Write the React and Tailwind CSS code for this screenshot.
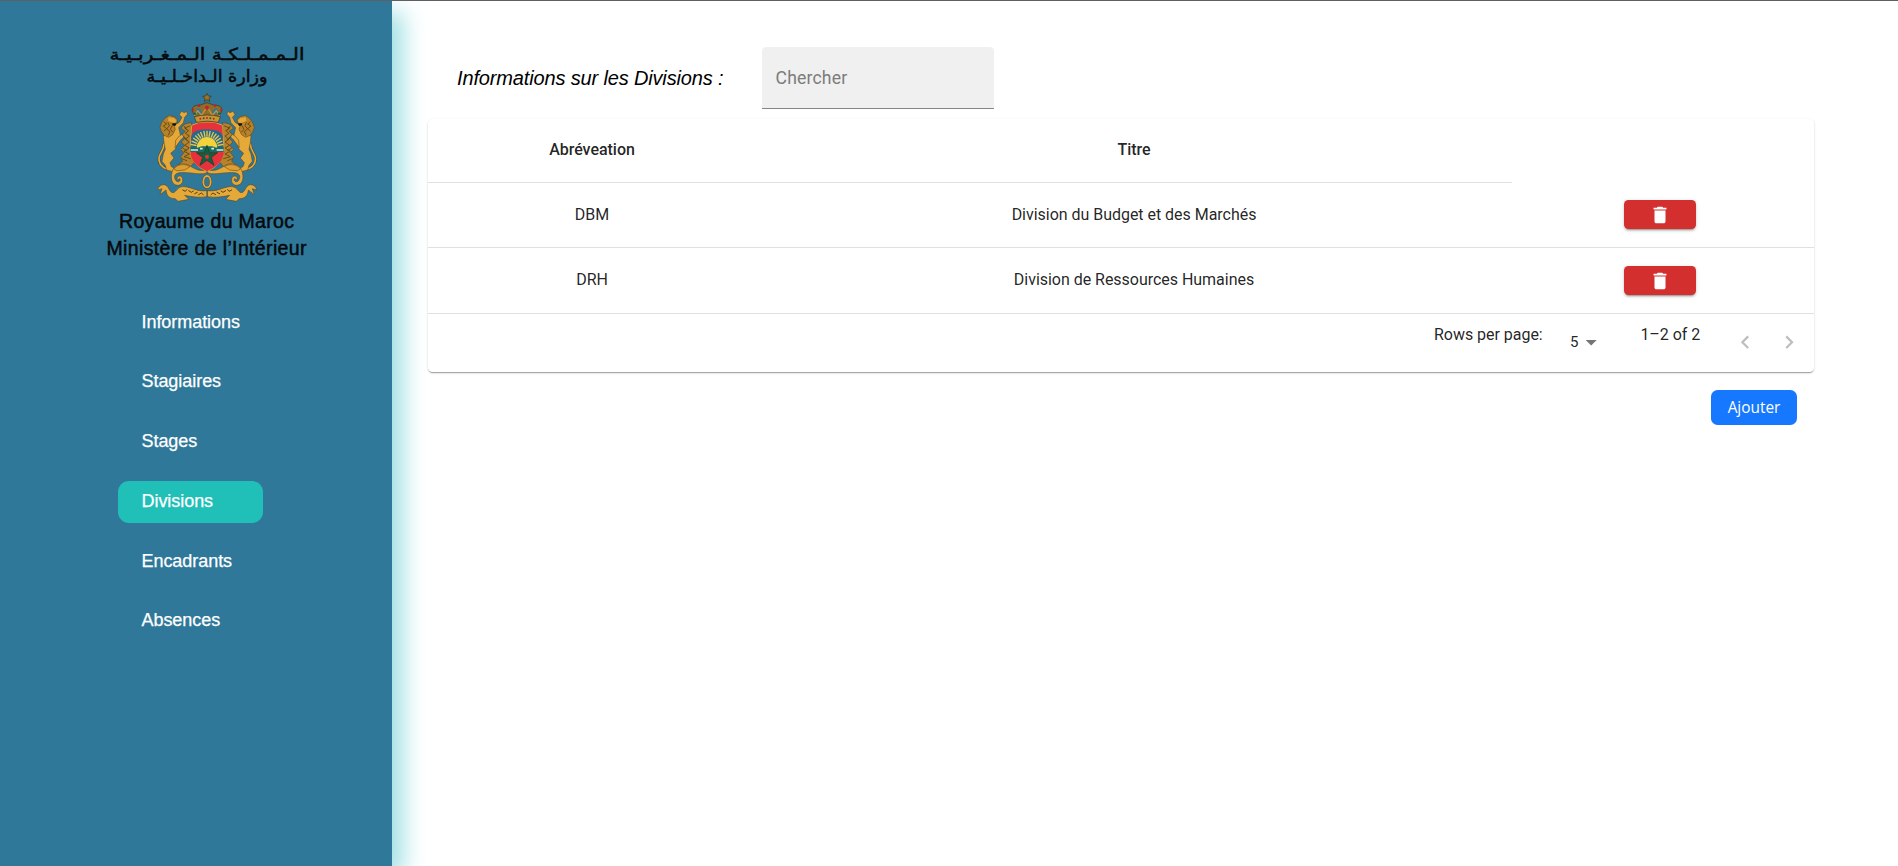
import React from "react";

const nav = ["Informations", "Stagiaires", "Stages", "Divisions", "Encadrants", "Absences"];
const rows = [
  { abbr: "DBM", title: "Division du Budget et des Marchés", height: "h-[65px] pb-px" },
  { abbr: "DRH", title: "Division de Ressources Humaines", height: "h-[66px]" },
];
const rays = [-80, -68, -56, -45, -34, -23, -11, 0, 11, 23, 34, 45, 56, 68, 80];

/* One side of the coat of arms: supporter, mantle and scroll. */
function Side() {
  return (
    <g stroke="#5b4317" strokeWidth="1.6" strokeLinejoin="round" strokeLinecap="round">
      <path fill="none" strokeWidth="8" d="M232 238C212 230 205 218 207 203C209 190 222 180 222 162" />
      <path fill="none" stroke="#e5a93a" strokeWidth="5" d="M232 238C212 230 205 218 207 203C209 190 222 180 222 162" />
      <path fill="#e5a93a" d="M256 104L268 97L276 82L268 74L274 64L283 68L290 64L292 73L284 82L280 98L266 113L272 138L262 160L256 178L242 190L252 204L240 218L244 230L258 236L252 246L230 240L226 226L216 214L220 192L226 178L222 158L220 138Z" />
      <path fill="#e5a93a" d="M258 150L268 138L278 132L282 140L272 150L256 172Z" />
      <path fill="#b98128" d="M226 84L238 76L252 80L262 88L260 100L252 106L256 118L248 134L236 142L222 136L214 124L210 112L216 96Z" />
      <path fill="#e5a93a" stroke="none" d="M236 82L252 84L260 92L254 100L242 96L234 92Z" />
      <path fill="none" strokeWidth="2.5" d="M222 96l8 6-10 6 10 8-8 7M234 98l4 9-8 10 10 8-5 10M246 108l-5 10 7 8" />
      <path fill="#141414" stroke="none" d="M247 100l12 0-3 8-9-2z" />
      <path fill="#b5822d" d="M304 98C286 100 276 104 274 116L286 124L276 134L286 144L274 156L284 166L272 178L282 188L272 200L278 214L264 226L300 232L316 214L302 190Z" />
      <path fill="none" stroke="#4f3c14" strokeWidth="2.2" d="M300 108l-16 6 12 8-10 8 12 8-12 10 12 8-14 10 14 8-16 10 16 8-16 8 20 6M282 108l8 12M280 140l12 10M278 174l12 8M276 206l14 6" />
      <path fill="#e5a93a" d="M350 238C336 246 318 240 300 228C282 216 256 222 248 240C240 262 244 284 262 286C276 287 282 272 276 262C270 254 258 260 262 270L268 268C266 264 272 264 270 272C262 282 252 268 254 258C258 246 276 248 290 248C310 248 334 256 350 248Z" />
      <path fill="#dba035" d="M252 236C262 222 286 220 300 230L284 240L262 242Z" />
      <path fill="#e5a93a" d="M350 302C322 306 306 292 284 290C262 288 262 304 250 308C236 308 238 286 222 284C210 284 204 292 203 300L216 296L210 314L228 300C230 318 238 326 256 326L264 334L296 328L284 316C306 320 326 324 350 320Z" />
      <path fill="none" stroke="#3a2b0d" strokeWidth="2.5" d="M278 300l8 4 4-5M296 302l8 5 6-4M314 311l8-4M326 314l8-5 6 5" />
    </g>
  );
}

function Crown() {
  return (
    <g stroke="#3f3012" strokeWidth="2" strokeLinejoin="round">
      <path fill="#8e6c2a" d="M316 80C300 62 304 46 322 46C334 46 340 40 350 38C360 40 366 46 378 46C396 46 400 62 384 80Z" />
      <path fill="#2f7899" stroke="none" d="M320 56c8-2 14 4 16 14l-14 4c-6-6-8-14-2-18zM380 56c-8-2-14 4-16 14l14 4c6-6 8-14 2-18z" />
      <path fill="none" stroke="#c99435" strokeWidth="4" d="M312 78l10-16 12 14 16-26 16 26 12-14 10 16" />
      <path fill="#c99435" d="M312 80Q350 70 390 80L384 97Q350 90 318 97Z" />
      <path fill="#9a742d" d="M350 10l4 8 9 1-7 6 2 9-8-5-8 5 2-9-7-6 9-1z" />
      <g stroke="none" fill="#c4202b">
        <circle cx="350" cy="53" r="6" /><circle cx="307" cy="60" r="4" /><circle cx="393" cy="60" r="4" />
        <circle cx="326" cy="47" r="4" /><circle cx="374" cy="47" r="4" /><circle cx="330" cy="86" r="3" />
        <circle cx="370" cy="86" r="3" /><circle cx="350" cy="84" r="3" />
      </g>
      <g stroke="none" fill="#17663f">
        <circle cx="314" cy="71" r="3.5" /><circle cx="386" cy="71" r="3.5" /><circle cx="340" cy="85" r="3" /><circle cx="360" cy="85" r="3" />
      </g>
    </g>
  );
}

function Logo() {
  return (
    <svg className="block h-[220px] w-[210px]" viewBox="102 42 210 220">
      <g fontFamily="DejaVu Sans, sans-serif" fontSize="16.5" fill="#05090b" stroke="#05090b" strokeWidth="0.5" direction="rtl" textAnchor="middle">
        <text x="207" y="60" textLength="195" lengthAdjust="spacingAndGlyphs">الـمـمـلـكـة الـمـغـربـيـة</text>
        <text x="207" y="82" textLength="121" lengthAdjust="spacingAndGlyphs">وزارة الـداخـلـيـة</text>
      </g>
      <g transform="translate(90 90) scale(0.33333)">
        <Side />
        <g transform="translate(703 0) scale(-1 1)"><Side /></g>
        <path d="M305 106Q326 94 351 96Q376 94 398 106L402 180Q400 224 351 244Q302 224 300 180Z" fill="#e5323b" stroke="#d8a23a" strokeWidth="3" />
        <path d="M304 138Q310 118 351 118Q392 118 398 138L400 174H302Z" fill="#23698f" />
        <g stroke="#e9c64a" strokeWidth="4">
          {rays.map((a) => (
            <path key={a} d="M351 140V122" transform={`rotate(${a} 351 172)`} />
          ))}
        </g>
        <path d="M320 174a31 33 0 0 1 62 0z" fill="#f3d23c" />
        <path d="M301 172l12-3 10 4 12-4h32l12 4 10-4 12 3v14H301z" fill="#1b6b62" />
        <path d="M302 180h22M380 180h20M330 176h8M364 176h8" stroke="#dce9e4" strokeWidth="5" />
        <path d="M301 187h101q-4 38-51 56q-47-18-50-56z" fill="#e5323b" />
        <path d="M351 166l8 22h24l-19 14 8 24-21-15-21 15 8-24-19-14h24z" fill="#12603f" stroke="#0b3f2b" strokeWidth="2" />
        <circle cx="351" cy="200" r="6" fill="#e5323b" />
        <ellipse cx="351" cy="275" rx="11" ry="17" fill="none" stroke="#5b4317" strokeWidth="8" />
        <ellipse cx="351" cy="275" rx="11" ry="17" fill="none" stroke="#e5a93a" strokeWidth="5.500" />
        <g transform="translate(1 0)"><Crown /></g>
      </g>
      <g fontFamily="Liberation Sans, Arial, sans-serif" fontSize="19.5" fill="#05090b" stroke="#05090b" strokeWidth="0.5" textAnchor="middle">
        <text x="206.500" y="228" textLength="175">Royaume du Maroc</text>
        <text x="206.500" y="255" textLength="200">Ministère de l’Intérieur</text>
      </g>
    </svg>
  );
}

function Chevron({ d }) {
  return (
    <svg className="size-[26.4px]" viewBox="0 0 24 24" fill="#bdbdbd"><path d={d} /></svg>
  );
}

function DeleteButton() {
  return (
    <button className="flex h-[29px] w-[72px] items-center justify-center rounded-[4.4px] bg-[#d32f2f] shadow-[0_3px_1px_-2px_rgba(0,0,0,0.2),0_2px_2px_0_rgba(0,0,0,0.14),0_1px_5px_0_rgba(0,0,0,0.12)]">
      <svg className="size-[22px]" viewBox="0 0 24 24" fill="#fff">
        <path d="M6 19c0 1.100.9 2 2 2h8c1.100 0 2-.9 2-2V7H6v12zM19 4h-3.500l-1-1h-5l-1 1H5v2h14V4z" />
      </svg>
    </button>
  );
}

export default function App() {
  return (
    <div className="flex h-[866px] w-full overflow-hidden border-t border-[#5f5f66] bg-white font-['Roboto',sans-serif]">
      <aside className="flex w-[392px] shrink-0 flex-col bg-[#2f7899] pt-[41px] shadow-[11px_11px_22px_#a0e0e4]">
        <div className="ml-[102px]"><Logo /></div>
        <nav className="mt-[40px] ml-[118px] flex w-[145px] flex-col gap-[17.8px] font-['Liberation_Sans',sans-serif] text-[18px] tracking-[-0.05px] text-white">
          {nav.map((n) => (
            <a
              key={n}
              className={
                n === "Divisions"
                  ? "flex h-[42px] items-center rounded-[11px] bg-[#20c0b8] pb-[2px] pl-[23.5px] [-webkit-text-stroke:0.25px_white]"
                  : "flex h-[42px] items-center pb-[2px] pl-[23.5px] [-webkit-text-stroke:0.25px_white]"
              }
            >
              {n}
            </a>
          ))}
        </nav>
      </aside>

      <main className="flex w-[1422px] flex-col pt-[46px] pl-9">
        <div className="flex h-[62px] items-center">
          <h1 className="w-[334px] pl-[29px] font-['Liberation_Sans',sans-serif] text-[20px] tracking-[-0.15px] whitespace-nowrap text-black italic">
            Informations sur les Divisions :
          </h1>
          <div className="flex h-[62px] w-[232px] items-center rounded-t-[4.4px] border-b border-[#858585] bg-[#f0f0f0] pt-0.5 pl-[13.5px] text-[17.6px] tracking-[0.01em] text-[#7c7c7c]">
            Chercher
          </div>
        </div>

        <section className="mt-[10px] rounded-[4.4px] bg-white text-[16px] leading-6 tracking-[-0.03px] text-black/87 shadow-[0_2px_1px_-1px_rgba(0,0,0,0.2),0_1px_1px_0_rgba(0,0,0,0.14),0_1px_3px_0_rgba(0,0,0,0.12)]">
          <div className="grid h-16 grid-cols-[328px_756px_302px] text-center font-medium">
            <div className="border-b border-[#e0e0e0] pt-[19px]">Abréveation</div>
            <div className="border-b border-[#e0e0e0] pt-[19px]">Titre</div>
          </div>
          {rows.map((r) => (
            <div key={r.abbr} className={`grid grid-cols-[328px_756px_302px] border-b border-[#e0e0e0] text-center ${r.height}`}>
              <div className="pt-[20px]">{r.abbr}</div>
              <div className="pt-[20px]">{r.title}</div>
              <div className="flex items-center pl-[112px]"><DeleteButton /></div>
            </div>
          ))}
          <div className="flex h-[58px] pl-[1006px]">
            <span className="w-[136px] pt-[9px]">Rows per page:</span>
            <span className="w-[9px] pt-4 text-[15px]">5</span>
            <svg className="mt-[15px] -ml-px size-[26.4px]" viewBox="0 0 24 24" fill="#757575"><path d="M7 10l5 5 5-5z" /></svg>
            <span className="ml-9 w-[92px] pt-[9px]">1–2 of 2</span>
            <div className="flex gap-[17.6px] pt-[15px]">
              <Chevron d="M15.410 7.410L14 6l-6 6 6 6 1.410-1.410L10.830 12z" />
              <Chevron d="M10 6L8.590 7.410 13.170 12l-4.580 4.590L10 18l6-6z" />
            </div>
          </div>
        </section>

        <button className="mt-[18px] mr-[17px] h-[35px] w-[86px] self-end rounded-[6.6px] bg-[#1677ff] pt-px font-['Open_Sans','Noto_Sans',sans-serif] text-[15.4px] text-white">
          Ajouter
        </button>
      </main>
    </div>
  );
}
